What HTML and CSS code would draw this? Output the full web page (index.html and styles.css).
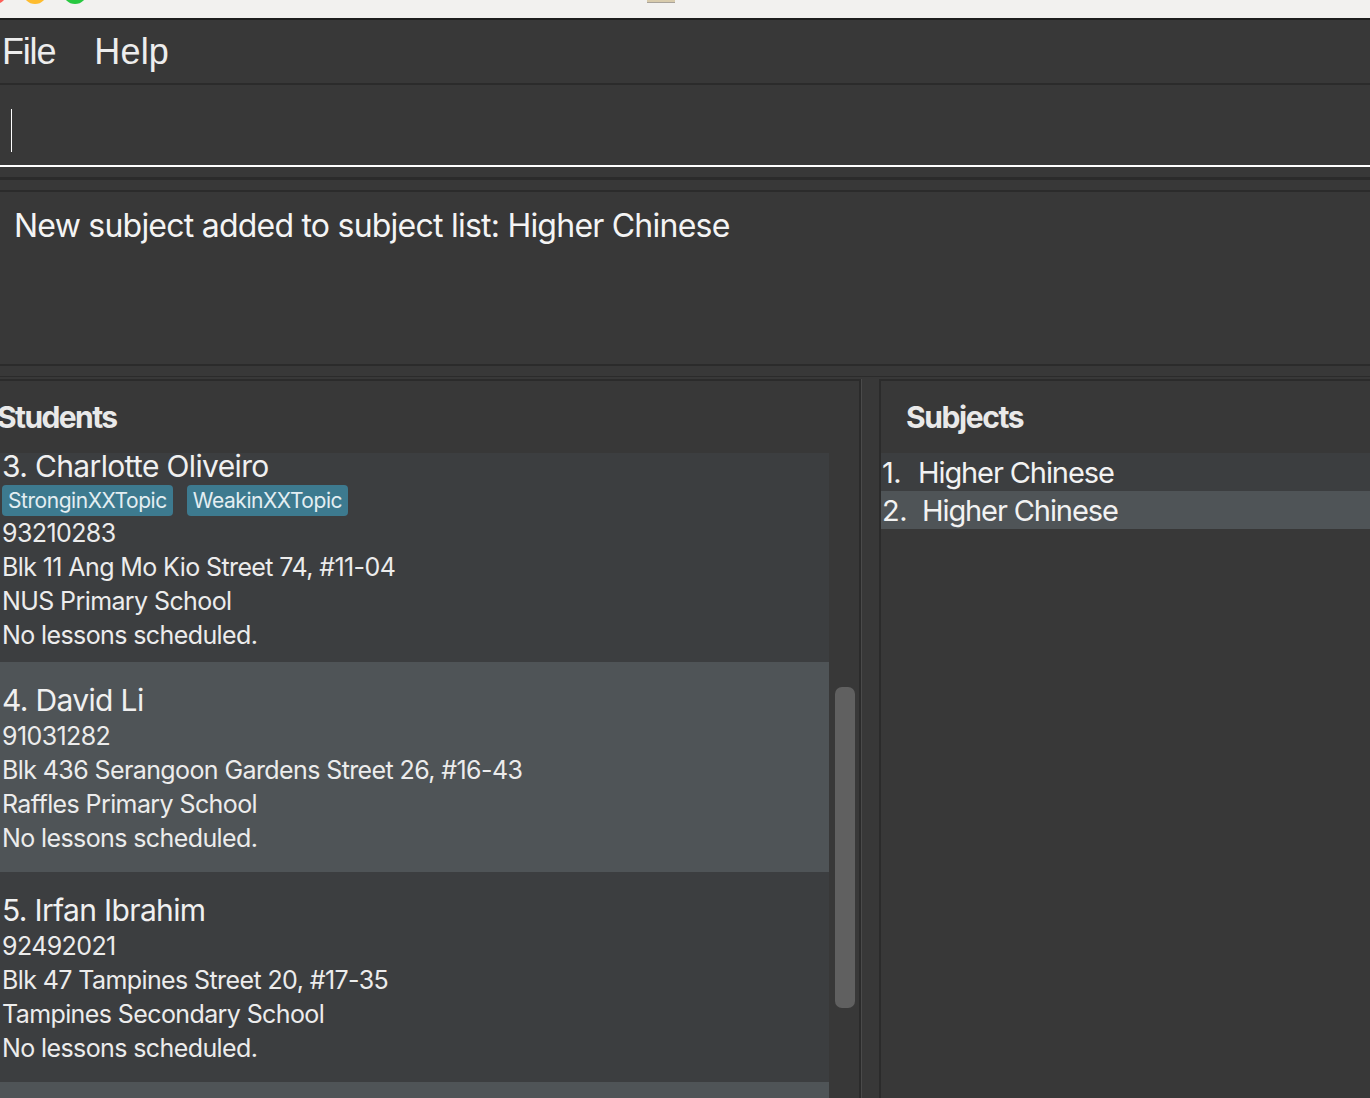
FILE: index.html
```html
<!DOCTYPE html>
<html>
<head>
<meta charset="utf-8">
<link rel="stylesheet" href="styles.css">
</head>
<body>
<div class="titlebar">
  <div class="lights">
    <span class="light red"></span>
    <span class="light yellow"></span>
    <span class="light green"></span>
  </div>
  <span class="doc-icon"></span>
</div>
<nav class="menubar">
  <span class="menu-item menu-file">File</span>
  <span class="menu-item menu-help">Help</span>
</nav>
<div class="command">
  <span class="caret"></span>
</div>
<div class="gap-block">
  <div class="band"></div>
  <div class="line3"></div>
  <div class="band"></div>
</div>
<div class="result">New subject added to subject list: Higher Chinese</div>
<div class="gap-block2">
  <div class="band"></div>
  <div class="line1"></div>
  <div class="band-thin"></div>
</div>
<main class="panels">
  <section class="students">
    <h2 class="panel-title students-title">Students</h2>
    <div class="list-area">
      <div class="list-viewport">
        <div class="list">
          <article class="card card-odd card-tagged">
            <div class="name">3. Charlotte Oliveiro</div>
            <div class="tags">
              <span class="tag">StronginXXTopic</span>
              <span class="tag">WeakinXXTopic</span>
            </div>
            <div class="line">93210283</div>
            <div class="line">Blk 11 Ang Mo Kio Street 74, #11-04</div>
            <div class="line">NUS Primary School</div>
            <div class="line">No lessons scheduled.</div>
          </article>
          <article class="card card-even">
            <div class="name">4. David Li</div>
            <div class="line">91031282</div>
            <div class="line">Blk 436 Serangoon Gardens Street 26, #16-43</div>
            <div class="line">Raffles Primary School</div>
            <div class="line">No lessons scheduled.</div>
          </article>
          <article class="card card-odd">
            <div class="name">5. Irfan Ibrahim</div>
            <div class="line">92492021</div>
            <div class="line">Blk 47 Tampines Street 20, #17-35</div>
            <div class="line">Tampines Secondary School</div>
            <div class="line">No lessons scheduled.</div>
          </article>
          <article class="card card-even card-last"></article>
        </div>
      </div>
      <div class="scroll-track">
        <div class="scroll-thumb"></div>
      </div>
    </div>
  </section>
  <div class="divider">
    <span class="div-dark"></span>
    <span class="div-light"></span>
    <span class="div-gap"></span>
    <span class="div-dark"></span>
  </div>
  <section class="subjects">
    <h2 class="panel-title subjects-title">Subjects</h2>
    <ol class="subject-list">
      <li class="subject subject-odd"><span class="num">1.</span><span class="sname">Higher Chinese</span></li>
      <li class="subject subject-even"><span class="num">2.</span><span class="sname sname-2">Higher Chinese</span></li>
    </ol>
  </section>
</main>
</body>
</html>
```

FILE: styles.css
```css
* { box-sizing: border-box; }
html, body {
  margin: 0;
  padding: 0;
  width: 1370px;
  height: 1098px;
  overflow: hidden;
  background: #383838;
  font-family: Inter, "Noto Sans", sans-serif;
  color: #f2f2f2;
}

.titlebar {
  height: 20px;
  background: #f2f1ef;
  border-bottom: 2px solid #1e1e1e;
  display: flex;
  overflow: hidden;
}
.lights {
  display: flex;
  gap: 16px;
  margin-left: -17px;
  margin-top: -20px;
}
.light {
  width: 24px;
  height: 24px;
  border-radius: 50%;
  display: block;
}
.red { background: #fd5f57; }
.yellow { background: #febc2e; }
.green { background: #28c840; }
.doc-icon {
  display: block;
  width: 28px;
  height: 3px;
  margin-left: 560px;
  background: #d8cbac;
  border-bottom: 1px solid #a9a39a;
}

.menubar {
  height: 65px;
  display: flex;
  align-items: center;
  gap: 39px;
  padding-left: 2px;
  font-family: "Liberation Sans", Arial, sans-serif;
  font-size: 36px;
  color: #ededed;
  border-bottom: 2px solid #2b2b2b;
}
.menu-file { letter-spacing: -1.2px; }
.menu-help { letter-spacing: 0.2px; }

.command {
  height: 82px;
  border-bottom: 2px solid #ffffff;
  padding: 24px 0 0 11px;
}
.caret {
  display: block;
  width: 1px;
  height: 43px;
  background: #ffffff;
}

.gap-block { border-bottom: 2px solid #2b2b2b; }
.gap-block .band { height: 10px; }
.line3 { height: 3px; background: #2b2b2b; }

.result {
  height: 174px;
  padding: 12px 0 0 14px;
  font-size: 32px;
  letter-spacing: -0.77px;
  line-height: 44px;
  color: #f4f4f4;
  border-bottom: 2px solid #2b2b2b;
}

.gap-block2 .band { height: 10px; }
.line1 { height: 1px; background: #2b2b2b; }
.band-thin { height: 2px; }

.panels {
  display: flex;
  height: 719px;
}

.students {
  width: 859px;
  display: flex;
  flex-direction: column;
  border-top: 2px solid #2b2b2b;
}
.panel-title {
  margin: 0;
  height: 72px;
  display: flex;
  align-items: center;
  font-size: 30px;
  font-weight: 700;
  letter-spacing: -1.6px;
  color: #e9e9e9;
}
.students-title { margin-left: -3px; }
.subjects-title { padding-left: 25px; letter-spacing: -1.4px; }

.list-area {
  flex: 1;
  display: flex;
  min-height: 0;
}
.list-viewport {
  width: 829px;
  overflow: hidden;
}
.list { margin-top: -24px; }

.card {
  padding: 20px 0 17px 2px;
}
.card-tagged { padding-top: 19px; padding-bottom: 10px; }
.card-last { height: 210px; }
.card-odd { background: #3c3e40; }
.card-even { background: #4f5457; }

.name {
  height: 36px;
  line-height: 36px;
  font-size: 30px;
  letter-spacing: -0.65px;
  margin-bottom: 1px;
  color: #f0f0f0;
}
.tags {
  display: flex;
  gap: 14px;
  margin-top: 1px;
  height: 31px;
}
.tag {
  background: #3d7a8f;
  border-radius: 4px;
  padding: 0 6px;
  height: 31px;
  line-height: 31px;
  font-size: 21px;
  letter-spacing: -0.45px;
  color: #e4eef2;
}
.line {
  height: 34px;
  line-height: 34px;
  font-size: 25px;
  letter-spacing: -0.6px;
  color: #ececec;
}

.scroll-track {
  width: 30px;
  padding: 234px 0 0 6px;
}
.scroll-thumb {
  width: 20px;
  height: 321px;
  background: #606060;
  border-radius: 7px;
}

.divider {
  display: flex;
  width: 22px;
}
.div-dark { width: 2px; background: #2b2b2b; }
.div-light { width: 1px; background: #4a4a4a; }
.div-gap { flex: 1; }

.subjects {
  flex: 1;
  border-top: 2px solid #2b2b2b;
  display: flex;
  flex-direction: column;
}
.subject-list {
  list-style: none;
  margin: 0;
  padding: 0;
}
.subject {
  height: 38px;
  display: flex;
  align-items: center;
  font-size: 29px;
  letter-spacing: -1.1px;
  padding-left: 1px;
  color: #f2f2f2;
}
.subject-odd { background: #3c3e40; }
.subject-even { background: #4f5457; }
.num { width: 36px; letter-spacing: -0.5px; }
.sname-2 { margin-left: 4px; }
```
